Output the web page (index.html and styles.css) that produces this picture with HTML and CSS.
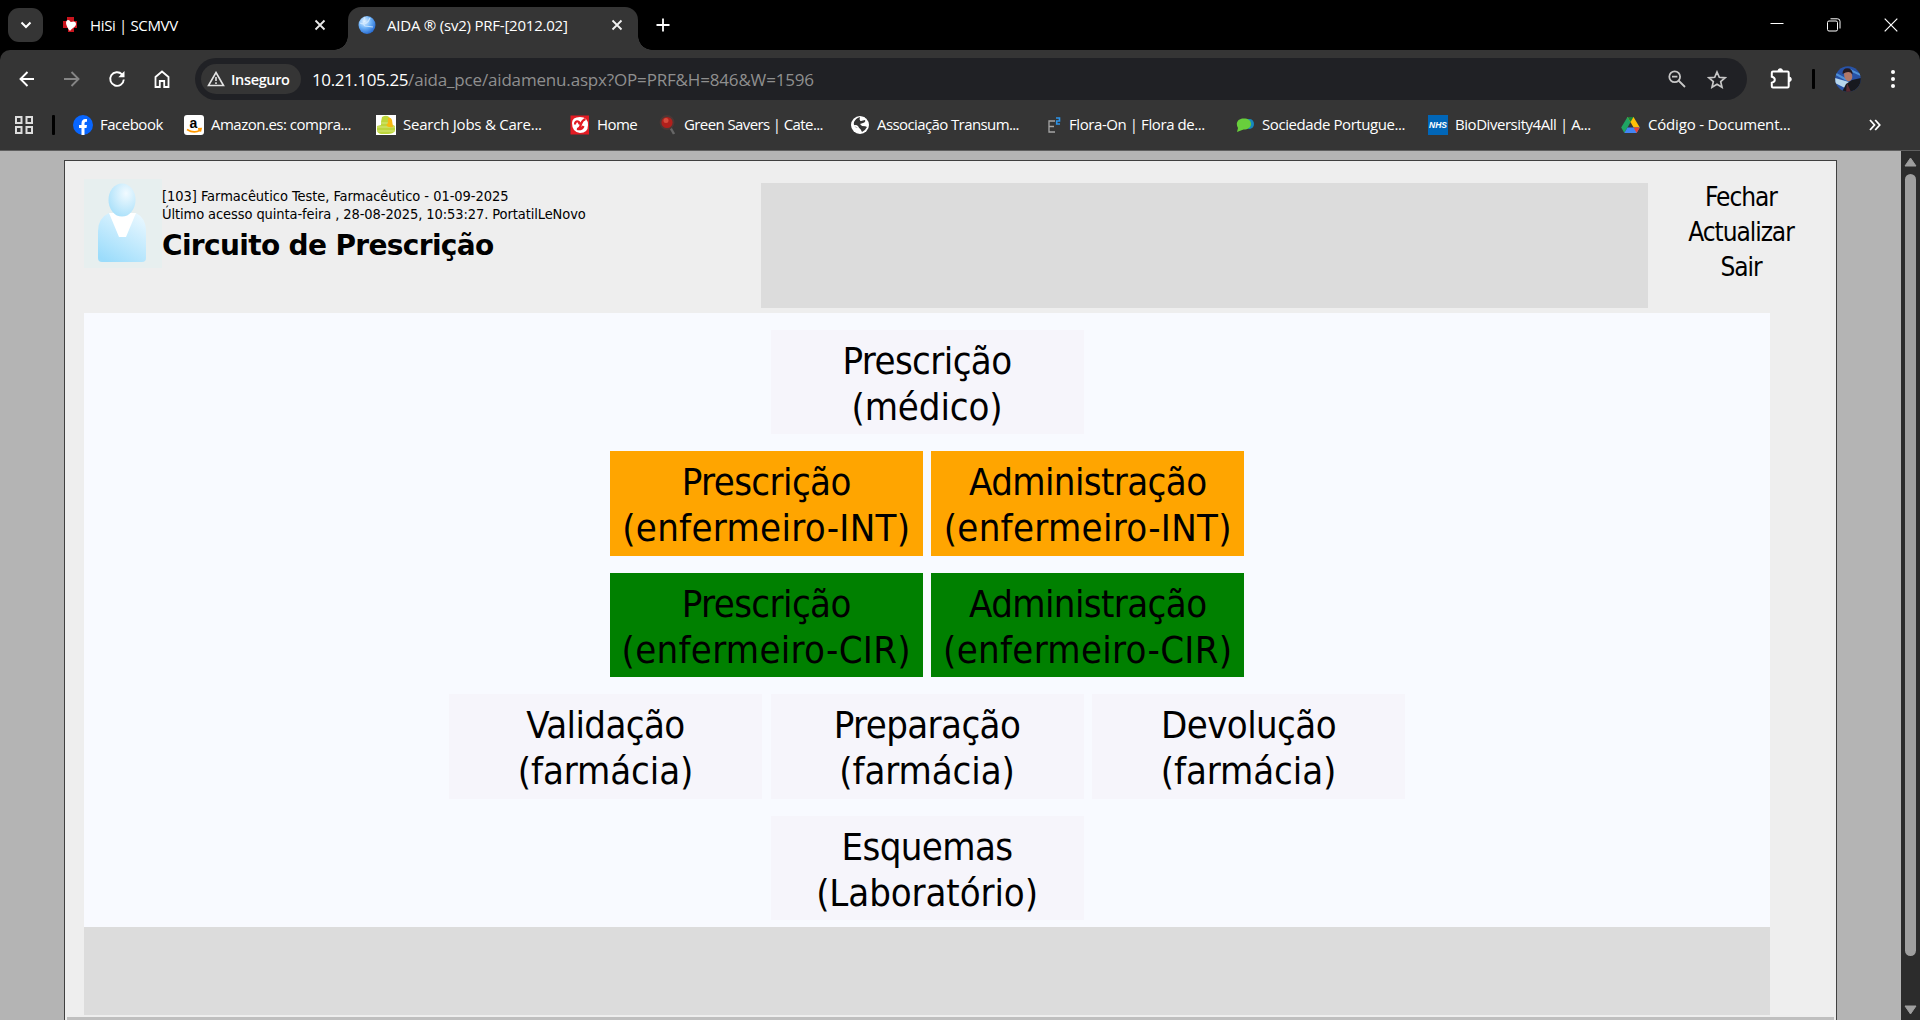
FILE: index.html
```html
<!DOCTYPE html>
<html lang="pt">
<head>
<meta charset="utf-8">
<title>AIDA ® (sv2) PRF-[2012.02]</title>
<link rel="stylesheet" href="styles.css">
</head>
<body>
<header class="tabstrip">
  <button class="tab-search"><svg width="12" height="8" viewBox="0 0 12 8"><path d="M1.5 1.5 6 6l4.500-4.500" fill="none" stroke="#fff" stroke-width="2"/></svg></button>
  <div class="tab">
    <svg class="fav" width="18" height="18" viewBox="0 0 18 18"><path d="M6 1h7v4h3v7h-3v4H7v-4H2V5h4z" fill="#c9141d"/><path d="M7 4c2 0 2 2 3 2 2-1 5-1 5 2s-4 4-6 7C7 13 5 9 5 7s1-3 2-3z" fill="#fff"/></svg>
    <span class="tab-title tab-title-a">HiSi | SCMVV</span>
    <svg class="close" width="12" height="12" viewBox="0 0 12 12"><path d="m1.500 1.500 9 9m0-9-9 9" stroke="#e8e8e8" stroke-width="1.800"/></svg>
  </div>
  <div class="tab active">
    <svg class="fav" width="18" height="20" viewBox="0 0 18 20"><defs><radialGradient id="globe" cx=".35" cy=".3" r=".75"><stop offset="0" stop-color="#e5f3ff"/><stop offset=".5" stop-color="#6eb2f8"/><stop offset="1" stop-color="#2468cf"/></radialGradient></defs><ellipse cx="9" cy="10" rx="8.500" ry="9" fill="url(#globe)"/><path d="M7 2q-3 7 0 9l8 1M2 8q7 3 10-5" fill="none" stroke="#d7ecff" stroke-width="1.200" opacity=".8"/></svg>
    <span class="tab-title tab-title-b">AIDA ® (sv2) PRF-[2012.02]</span>
    <svg class="close" width="12" height="12" viewBox="0 0 12 12"><path d="m1.500 1.500 9 9m0-9-9 9" stroke="#f2f2f2" stroke-width="1.800"/></svg>
  </div>
  <svg class="new-tab" width="14" height="14" viewBox="0 0 14 14"><path d="M7 .5v13M.5 7h13" stroke="#fff" stroke-width="1.800"/></svg>
  <div class="window-buttons">
    <svg width="14" height="14" viewBox="0 0 14 14"><path d="M.5 5.500h13" stroke="#fff"/></svg>
    <svg width="14" height="14" viewBox="0 0 14 14" fill="none" stroke="#fff"><rect x=".5" y="3" width="10" height="10" rx="1.500"/><path d="M3.500 .8h7a2.500 2.500 0 0 1 2.500 2.500v7.200"/></svg>
    <svg width="14" height="14" viewBox="0 0 14 14"><path d="m.7.7 12.600 12.600m0-12.600L.7 13.300" stroke="#fff" stroke-width="1.200"/></svg>
  </div>
</header>

<section class="chrome">
  <nav class="toolbar">
    <div class="nav-icons">
      <svg width="20" height="20" viewBox="0 0 20 20"><path d="M17 10H4m6.500-7L3.500 10l7 7" fill="none" stroke="#fff" stroke-width="1.900"/></svg>
      <svg width="20" height="20" viewBox="0 0 20 20"><path d="M2 10h14M9.500 3l7 7-7 7" fill="none" stroke="#858585" stroke-width="1.900"/></svg>
      <svg width="20" height="20" viewBox="0 0 20 20"><path d="M16.800 10.500A6.800 6.800 0 1 1 15 5.400L16.500 7" fill="none" stroke="#fff" stroke-width="1.900"/><path d="M17.500 2v6.200h-6.200z" fill="#fff"/></svg>
      <svg width="20" height="20" viewBox="0 0 20 20"><path d="M3.500 18V8L10 2.500 16.500 8v10h-4.300v-6H7.800v6z" fill="none" stroke="#fff" stroke-width="1.800"/></svg>
    </div>
    <div class="omnibox">
      <div class="chip"><svg width="18" height="16" viewBox="0 0 18 16"><path d="M9 1.500 16.500 14.500h-15z" fill="none" stroke="#e3e3e3" stroke-width="1.600"/><path d="M9 6v4m0 1.200v1.800" stroke="#e3e3e3" stroke-width="1.600"/></svg><span>Inseguro</span></div>
      <div class="url"><span class="host">10.21.105.25</span><span class="path">/aida_pce/aidamenu.aspx?OP=PRF&amp;H=846&amp;W=1596</span></div>
      <svg class="zoom-out" width="18" height="18" viewBox="0 0 18 18" fill="none" stroke="#c7c7c7" stroke-width="1.800"><circle cx="6.700" cy="6.700" r="5.400"/><path d="m10.500 10.500 6.500 6.500M4 6.700h5.400"/></svg>
      <svg class="star" width="20" height="19" viewBox="0 0 20 19"><path d="m10 2 2.300 5.300 5.700.5-4.300 3.800 1.300 5.600-5-3-5 3 1.300-5.600L2 7.800l5.700-.5z" fill="none" stroke="#c7c7c7" stroke-width="1.700"/></svg>
    </div>
    <svg class="puzzle" width="22" height="22" viewBox="0 0 22 22"><path d="M3 3.500h14.500c.8 0 1.200.4 1.200 1.200v13.600c0 .8-.4 1.200-1.200 1.200H3c-.8 0-1.200-.4-1.200-1.200v-3.500c4-1 4-5 0-6V4.700c0-.8.400-1.200 1.200-1.200z" fill="none" stroke="#fff" stroke-width="2"/><path d="M8 3a2.300 2.300 0 0 1 4.600 0M19 9a2.300 2.300 0 0 1 0 4.600" fill="#fff" stroke="#fff"/></svg>
    <i class="divider"></i>
    <svg class="avatar" width="26" height="26" viewBox="0 0 26 26"><defs><clipPath id="av"><circle cx="13" cy="13" r="12.800"/></clipPath></defs><g clip-path="url(#av)"><path d="M0 0h26v26H0z" fill="#2852a5"/><path d="m0 12 14 4-2 7L0 17z" fill="#b7d6ec"/><path d="m1 8 11 6M15 4l11 5" stroke="#4e8fd5" stroke-width="2"/><path d="m7 26 4-8 6-4 9-2v14z" fill="#17191f"/><ellipse cx="13" cy="9.500" rx="4" ry="5.800" fill="#b07868" transform="rotate(-15 13 9)"/><path d="M7.500 8q0-7 7-5.500 3.500 2 3 6-3-4.500-10-.5z" fill="#251a1f"/><path d="m12 17 4 9h-5z" fill="#5a2930"/></g></svg>
    <svg class="menu" width="6" height="20" viewBox="0 0 6 20" fill="#fff"><circle cx="3" cy="3" r="2"/><circle cx="3" cy="10" r="2"/><circle cx="3" cy="17" r="2"/></svg>
  </nav>

  <nav class="bookmarks">
    <svg class="apps" width="18" height="20" viewBox="0 0 18 20" fill="none" stroke="#ddd" stroke-width="2"><path d="M1 2h5.500v6H1zM11.500 2H17v6h-5.500zM1 12h5.500v6H1zM11.500 12H17v6h-5.500z"/></svg>
    <i class="divider"></i>
    <div class="marks">
      <a class="mark facebook"><svg width="20" height="20" viewBox="0 0 20 20"><circle cx="10" cy="10" r="10" fill="#0866ff"/><path d="M8.500 20v-7H6v-3h2.500V8.500Q8.500 4 12.500 4H14v2.800h-1.200q-1.300 0-1.300 1.700V10H14l-.5 3h-2v7z" fill="#fff"/></svg><span>Facebook</span></a>
      <a class="mark amazon"><svg width="20" height="20" viewBox="0 0 20 20"><rect width="20" height="20" rx="3" fill="#fff"/><text x="9.500" y="12.800" text-anchor="middle" class="glyph-amz">a</text><path d="M3 14.500q7 4.500 13 .8M14 13.800l3-.2-.7 3" fill="none" stroke="#ff9900" stroke-width="1.700"/></svg><span>Amazon.es: compra...</span></a>
      <a class="mark jobs"><svg width="20" height="20" viewBox="0 0 20 20"><path d="M0 0h20v20H0z" fill="#fff"/><path d="M6 2q5-3 8 1l1 6 4 2v5q-2 3-7 3H5q-4-1-4-4v-4l4-1V7z" fill="#bdd63b"/><path d="M1 12h18M1 16h18M5 8h8" stroke="#d7e67f"/><path d="M12 3q3-1 4 2l1 7q-5 1-7-2 2-1 2-3z" fill="#f6b813"/></svg><span>Search Jobs &amp; Care...</span></a>
      <a class="mark home"><svg width="20" height="20" viewBox="0 0 20 20"><rect x=".5" y=".5" width="18.500" height="19" fill="#e31b23"/><path d="M2 8q0-6 8-6 8 0 8 8 0 8-8 8-8-1-8-10z" fill="#fff"/><path d="M5 9.500Q5 6 8 6.500q2 1 1 3M15.500 4q-3 1-4.500 5-1 5-4 5 5 1 6.500-3" fill="none" stroke="#e31b23" stroke-width="2.200"/></svg><span>Home</span></a>
      <a class="mark narrow green-savers"><svg width="17" height="20" viewBox="0 0 17 20"><path d="m11 12 4 7" stroke="#666" stroke-width="2.500"/><circle cx="8" cy="7.500" r="6.500" fill="#b1201c" stroke="#4c3836" stroke-width="1.800"/><circle cx="7" cy="5.500" r="2.500" fill="#d64b3c"/></svg><span>Green Savers | Cate...</span></a>
      <a class="mark narrow transum"><svg width="18" height="20" viewBox="0 0 18 20"><circle cx="9" cy="10" r="9" fill="#fff"/><path d="M3 7q2-4 6-5-1 3 1 4l4-1q1 2-2 3l-3 1 2 2q4 0 5 1-2 4-5 5-1-3-3-4l-4-1q-2-3-1-5z" fill="#353535"/><path d="M3 11q5-1 5 6M9 5l5-2" stroke="#fff" stroke-width="1.500" fill="none"/></svg><span>Associação Transum...</span></a>
      <a class="mark flora"><svg width="13" height="20" viewBox="0 0 13 20" fill="none"><path d="M7 6H1v11h6M1 11.500h5" stroke="#a5a5a5" stroke-width="1.300"/><path d="M8 3h3.500v3H8.700v3H12" stroke="#2c93e8" stroke-width="1.600"/></svg><span>Flora-On | Flora de...</span></a>
      <a class="mark narrow sociedade"><svg width="18" height="20" viewBox="0 0 18 20"><ellipse cx="13.500" cy="9" rx="4.500" ry="5" fill="#1687be"/><path d="M7.500 3.500c5 0 7.500 2 7.500 5.500s-3 5.500-7.500 5.500L1 17l1-4C-1 8 2 3.500 7.500 3.500z" fill="#68cf3c"/></svg><span>Sociedade Portugue...</span></a>
      <a class="mark biodiversity"><svg width="20" height="20" viewBox="0 0 20 20"><path d="M0 0h20v20H0z" fill="#0066b8"/><text x="10" y="13.200" text-anchor="middle" class="glyph-nhs">NHS</text></svg><span>BioDiversity4All | A...</span></a>
      <a class="mark narrow codigo"><svg width="19" height="18" viewBox="0 0 19 18"><path d="M6.500 1h6L6.500 11.500 3.300 17 .2 11.500z" fill="#1fa463"/><path d="M6.500 1h6l6.300 10.500h-6.200z" fill="#ffc107"/><path d="M6.500 11.500h12.300L15.600 17H3.300z" fill="#4285f4"/><path d="M12.600 11.500h6.200L15.600 17z" fill="#ea4335"/><path d="M6.500 1h6l-3 5z" fill="#188038"/></svg><span>Código - Document...</span></a>
    </div>
    <svg class="more" width="12" height="12" viewBox="0 0 12 12"><path d="m1 1 4.500 5L1 11M6.200 1l4.500 5-4.500 5" fill="none" stroke="#fff" stroke-width="1.800"/></svg>
  </nav>
</section>

<div class="viewport">
  <main class="page">
    <header class="page-head">
      <div class="user">
        <svg class="person" width="78" height="89" viewBox="0 0 78 89"><defs><linearGradient id="bodyfill" x1=".8" y1="0" x2=".2" y2="1"><stop offset="0" stop-color="#e8f7ff"/><stop offset="1" stop-color="#9bdcfb"/></linearGradient><radialGradient id="headfill" cx=".65" cy=".3" r=".8"><stop offset="0" stop-color="#f1faff"/><stop offset="1" stop-color="#a6dffa"/></radialGradient></defs><path d="M0 0h78v89H0z" fill="#e7efef"/><path d="M25 34h27q10 5 10 18v27q0 4-4 4H18q-4 0-4-4V52q0-13 11-18z" fill="url(#bodyfill)"/><path d="M25 34h27l-10 24h-7z" fill="#fff"/><ellipse cx="38" cy="21" rx="13.500" ry="16.500" fill="url(#headfill)"/></svg>
        <div class="user-text">
          <p class="line-a">[103] Farmacêutico Teste, Farmacêutico - 01-09-2025</p>
          <p class="line-b">Último acesso quinta-feira , 28-08-2025, 10:53:27. PortatilLeNovo</p>
          <h1>Circuito de Prescrição</h1>
        </div>
      </div>
      <div class="banner"></div>
      <nav class="actions"><a>Fechar</a><a>Actualizar</a><a>Sair</a></nav>
    </header>
    <section class="menu-panel">
      <div class="row"><a class="tile">Prescrição<span class="sub">(médico)</span></a></div>
      <div class="row"><a class="tile orange">Prescrição<span class="sub nurse">(enfermeiro-INT)</span></a><a class="tile orange">Administração<span class="sub nurse">(enfermeiro-INT)</span></a></div>
      <div class="row"><a class="tile green">Prescrição<span class="sub nurse">(enfermeiro-CIR)</span></a><a class="tile green">Administração<span class="sub nurse">(enfermeiro-CIR)</span></a></div>
      <div class="row"><a class="tile">Validação<span class="sub">(farmácia)</span></a><a class="tile">Preparação<span class="sub">(farmácia)</span></a><a class="tile">Devolução<span class="sub">(farmácia)</span></a></div>
      <div class="row"><a class="tile">Esquemas<span class="sub">(Laboratório)</span></a></div>
    </section>
    <div class="panel-foot"></div>
    <div class="page-foot"></div>
  </main>
  <aside class="scrollbar">
    <svg width="13" height="10" viewBox="0 0 13 10"><path d="M6.500 1 12 9H1z" fill="#9f9f9f" stroke="#9f9f9f" stroke-linejoin="round"/></svg>
    <i class="thumb"></i>
    <svg class="down" width="13" height="10" viewBox="0 0 13 10"><path d="M6.500 9 12 1H1z" fill="#9f9f9f" stroke="#9f9f9f" stroke-linejoin="round"/></svg>
  </aside>
</div>
</body>
</html>
```
FILE: styles.css
```css
* { box-sizing: border-box; }
body {
  margin: 0;
  width: 1920px;
  height: 1020px;
  overflow: hidden;
  display: flex;
  flex-direction: column;
  background: #000;
  font-family: "Open Sans", "Noto Sans", sans-serif;
}
svg { display: block; flex: none; }
p, h1 { margin: 0; }

/* tab strip */
.tabstrip { height: 50px; display: flex; align-items: flex-start; padding-left: 8px; color: #fff; }
.tab-search {
  width: 35px; height: 34px; margin-top: 8px; padding: 0; border: 0; border-radius: 11px;
  background: #353535; display: flex; align-items: center; justify-content: center;
}
.tab { height: 43px; margin-top: 7px; display: flex; align-items: center; width: 305px; padding: 0 22px 8px 18px; }
.tab .close { margin-left: auto; }
.tab-title { font-size: 15px; line-height: 20px; margin-left: 11px; white-space: nowrap; }
.tab-title-a { letter-spacing: -0.35px; }
.tab-title-b { letter-spacing: -0.22px; }
.tab.active {
  position: relative; width: 290px; padding: 0 15px 8px 10px;
  background: #353535; border-radius: 13px 13px 0 0;
}
.tab.active::before, .tab.active::after { content: ""; position: absolute; bottom: 0; width: 14px; height: 14px; }
.tab.active::before { left: -14px; background: radial-gradient(circle at 0 0, transparent 13.500px, #353535 14px); }
.tab.active::after { right: -14px; background: radial-gradient(circle at 100% 0, transparent 13.500px, #353535 14px); }
.new-tab { margin: 18px 0 0 18px; }
.window-buttons { display: flex; gap: 43px; margin: 18px 22px 0 auto; }

/* toolbar */
.chrome { height: 101px; background: #353535; border-radius: 10px 10px 0 0; border-bottom: 1px solid #5f5f5f; }
.toolbar { height: 58px; padding: 8px 0 8px 17px; display: flex; align-items: center; }
.nav-icons { display: flex; gap: 25px; width: 178px; flex: none; }
.omnibox { width: 1552px; height: 42px; flex: none; border-radius: 21px; background: #202125; display: flex; align-items: center; padding: 0 20px 0 6px; }
.chip { width: 100px; height: 30px; border-radius: 15px; background: #353535; display: flex; align-items: center; gap: 6px; padding-left: 6px; color: #fff; font-size: 14.500px; font-weight: 600; letter-spacing: -0.35px; }
.url { margin-left: 11px; font-size: 17px; white-space: nowrap; flex: 1; }
.host { color: #fff; letter-spacing: -0.4px; }
.path { color: #8f8f8f; letter-spacing: -0.17px; }
.star { margin-left: 21px; }
.puzzle { margin-left: 23px; }
.divider { width: 3px; height: 20px; border-radius: 1px; background: #000; flex: none; }
.toolbar .divider { margin-left: 20px; }
.avatar { margin-left: 20px; }
.menu { margin-left: 29px; }

/* bookmarks bar */
.bookmarks { height: 34px; display: flex; align-items: center; padding-left: 15px; color: #fff; }
.bookmarks .divider { margin: 0 18px 0 19px; }
.marks { display: grid; grid-template-columns: 111px 192px 194px 89px 192px 197px 188px 192px 193px 248px; }
.mark { display: flex; align-items: center; gap: 7px; font-size: 15px; line-height: 20px; letter-spacing: -0.5px; white-space: nowrap; }
.mark span { padding-bottom: 2px; }
.mark.narrow, .mark.flora { gap: 8px; }
.jobs { letter-spacing: -0.23px; }
.green-savers, .transum, .home { letter-spacing: -0.6px; }
.flora, .sociedade { letter-spacing: -0.42px; }
.biodiversity { letter-spacing: -0.45px; }
.codigo { letter-spacing: -0.18px; }
.glyph-amz { font: bold 14px/1 "Liberation Sans", sans-serif; letter-spacing: 0; }
.glyph-nhs { font: italic bold 8.500px "Liberation Sans", sans-serif; fill: #fff; letter-spacing: 0; }

/* page */
.viewport { flex: 1; min-height: 0; display: flex; background: #b4b4b4; }
.page {
  width: 1773px; height: 900px; margin: 9px 0 0 64px; border: 1px solid #404040;
  background: #eee; color: #000; font-family: "DejaVu Sans Condensed", "DejaVu Sans", sans-serif; font-stretch: condensed;
}
.page-head { height: 152px; display: flex; padding: 18px 0 0 19px; }
.user { display: flex; width: 677px; }
.person { width: 78px; height: 89px; }
.user-text { padding-top: 8px; white-space: nowrap; }
.user-text p { font-size: 14.500px; line-height: 18px; }
.line-a { letter-spacing: -0.04px; }
.line-b { letter-spacing: -0.09px; }
h1 { font-family: "DejaVu Sans", sans-serif; font-stretch: normal; font-size: 28px; line-height: 34px; margin-top: 6px; letter-spacing: -0.65px; }
.banner { width: 887px; height: 125px; margin-top: 4px; background: #dcdcdc; }
.actions { width: 186px; padding-top: 1px; display: flex; flex-direction: column; align-items: center; font-size: 26px; line-height: 35px; letter-spacing: -1.050px; }
.menu-panel { width: 1686px; height: 614px; margin-left: 19px; padding-top: 16.800px; background: #f8faff; display: flex; flex-direction: column; gap: 17px; }
.row { display: flex; justify-content: center; gap: 8.500px; }
.tile { width: 313px; height: 104.500px; padding-top: 8px; background: #f6f5fb; text-align: center; font-size: 38px; line-height: 46px; letter-spacing: -0.6px; white-space: nowrap; }
.sub { display: block; letter-spacing: -0.1px; }
.sub.nurse { letter-spacing: 0.3px; }
.orange { background: #ffa500; }
.green { background: #008000; }
.panel-foot { width: 1686px; height: 88px; margin-left: 19px; background: #dcdcdc; }
.page-foot { height: 20px; margin: 2px 2px 0; background: #bfbfbf; }

/* scrollbar */
.scrollbar { width: 19px; margin-left: auto; background: #2c2c2c; display: flex; flex-direction: column; align-items: center; padding: 6px 0 5px; }
.thumb { width: 11px; height: 782px; margin-top: 7px; border-radius: 5.500px; background: #9f9f9f; }
.down { margin-top: auto; }
```
